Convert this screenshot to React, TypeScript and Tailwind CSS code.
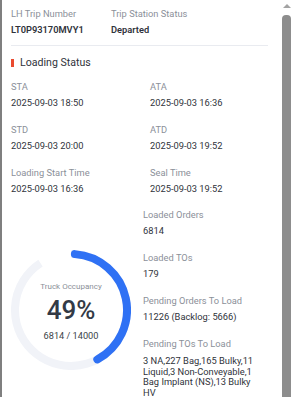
import React from "react";

type Field = { label: string; value: string };

const times: Field[] = [
  { label: "STA", value: "2025-09-03 18:50" },
  { label: "ATA", value: "2025-09-03 16:36" },
  { label: "STD", value: "2025-09-03 20:00" },
  { label: "ATD", value: "2025-09-03 19:52" },
  { label: "Loading Start Time", value: "2025-09-03 16:36" },
  { label: "Seal Time", value: "2025-09-03 19:52" },
];

const counts: Field[] = [
  { label: "Loaded Orders", value: "6814" },
  { label: "Loaded TOs", value: "179" },
  { label: "Pending Orders To Load", value: "11226 (Backlog: 5666)" },
];

const Label: React.FC<{ children: React.ReactNode }> = ({ children }) => (
  <div className="text-[9.3px] leading-[16px] text-[#8b9099] whitespace-nowrap">{children}</div>
);

const Value: React.FC<{ children: React.ReactNode; bold?: boolean }> = ({ children, bold }) => (
  <div
    className={`text-[9.3px] leading-[16px] text-[#2f333b] whitespace-nowrap ${bold ? "font-semibold" : ""}`}
  >
    {children}
  </div>
);

const Gauge: React.FC = () => (
  <div className="relative w-[120px] h-[120px] shrink-0 mt-[43px]">
    <svg className="absolute inset-0" width="120" height="120" viewBox="0 0 120 120">
      <path d="M60 4 A56 56 0 1 1 29.5 13.03" fill="none" stroke="#f1f3f8" strokeWidth="8" />
      <path
        d="M63.9 4.13 A56 56 0 0 1 86.29 109.44"
        fill="none"
        stroke="#2f71f4"
        strokeWidth="8"
        strokeLinecap="round"
      />
    </svg>
    <div className="relative flex flex-col items-center pt-[31px]">
      <div className="text-[8px] leading-[12px] text-[#8b9099]">Truck Occupancy</div>
      <div className="mt-[2px] text-[26px] leading-[30px] font-medium text-[#333a46]">49%</div>
      <div className="mt-[5px] text-[9.2px] leading-[12px] text-[#3a3f48]">6814 / 14000</div>
    </div>
  </div>
);

export default function App() {
  return (
    <div className="flex w-[291px] h-[397px] overflow-hidden bg-white font-['Roboto',sans-serif]">
      <div className="w-[2px] shrink-0 bg-[#7f7f7f]" />

      <div className="flex-1 min-w-0 pl-[9px] pr-[14px] pt-[6px]">
        {/* trip header */}
        <div className="flex">
          <div className="w-[100px]">
            <Label>LH Trip Number</Label>
            <Value bold>LT0P93170MVY1</Value>
          </div>
          <div>
            <Label>Trip Station Status</Label>
            <Value bold>Departed</Value>
          </div>
        </div>

        <div className="mt-[7px] h-px bg-[#e9ebf0]" />

        <div className="mt-[9px] flex items-center gap-[6px]">
          <span className="w-[3px] h-[8px] bg-[#ea4a2f]" />
          <span className="text-[10.6px] leading-[16px] text-[#2f333b]">Loading Status</span>
        </div>

        <div className="mt-[8px] grid grid-cols-[139px_1fr] gap-y-[11px]">
          {times.map((t) => (
            <div key={t.label}>
              <Label>{t.label}</Label>
              <Value>{t.value}</Value>
            </div>
          ))}
        </div>

        <div className="mt-[10px] flex gap-[12px]">
          <Gauge />
          <div className="w-[116px] flex flex-col gap-[11px]">
            {counts.map((c) => (
              <div key={c.label}>
                <Label>{c.label}</Label>
                <Value>{c.value}</Value>
              </div>
            ))}
            <div>
              <Label>Pending TOs To Load</Label>
              <div className="mt-[4px] text-[9.3px] leading-[10.5px] text-[#2f333b]">
                3 NA,227 Bag,165 Bulky,11 Liquid,3 Non-Conveyable,1 Bag Implant (NS),13 Bulky HV
              </div>
            </div>
          </div>
        </div>
      </div>

      {/* scrollbar */}
      <div className="w-[9px] shrink-0 flex flex-col items-center">
        <div className="mt-[4px] w-0 h-0 border-l-[4px] border-r-[4px] border-b-[4px] border-l-transparent border-r-transparent border-b-[#a3a3a3]" />
        <div className="mt-[7px] w-full flex-1 rounded-t-[4px] bg-[#8d8d8d]" />
      </div>
    </div>
  );
}
